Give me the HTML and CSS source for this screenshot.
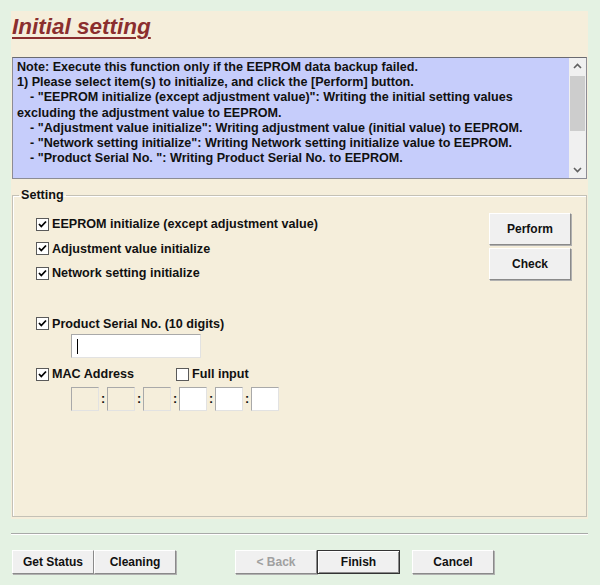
FILE: index.html
```html
<!DOCTYPE html>
<html>
<head>
<meta charset="utf-8">
<link rel="stylesheet" href="styles.css">
</head>
<body>
<div class="panel">
  <h1 class="title">Initial setting</h1>
  <div class="note">
    <div class="note-text">
      <div>Note: Execute this function only if the EEPROM data backup failed.</div>
      <div>1) Please select item(s) to initialize, and click the [Perform] button.</div>
      <div class="ind">- "EEPROM initialize (except adjustment value)": Writing the initial setting values</div>
      <div>excluding the adjustment value to EEPROM.</div>
      <div class="ind">- "Adjustment value initialize": Writing adjustment value (initial value) to EEPROM.</div>
      <div class="ind">- "Network setting initialize": Writing Network setting initialize value to EEPROM.</div>
      <div class="ind">- "Product Serial No. ": Writing Product Serial No. to EEPROM.</div>
    </div>
    <div class="vscroll">
      <svg class="arrow" width="17" height="17" viewBox="0 0 17 17"><path d="M5 10 L8.5 6.5 L12 10" fill="none" stroke="#606060" stroke-width="1.6"/></svg>
      <div class="track"><div class="thumb"></div></div>
      <svg class="arrow" width="17" height="17" viewBox="0 0 17 17"><path d="M5 7 L8.5 10.5 L12 7" fill="none" stroke="#606060" stroke-width="1.6"/></svg>
    </div>
  </div>
  <fieldset class="group">
    <legend>Setting</legend>
    <div class="group-body">
      <div class="opts">
        <div class="row r1"><span class="cb on"><svg width="11" height="11" viewBox="0 0 11 11"><path d="M2 5 L4.3 7.5 L9 2.5" fill="none" stroke="#000" stroke-width="1.8"/></svg></span>EEPROM initialize (except adjustment value)</div>
        <div class="row"><span class="cb on"><svg width="11" height="11" viewBox="0 0 11 11"><path d="M2 5 L4.3 7.5 L9 2.5" fill="none" stroke="#000" stroke-width="1.8"/></svg></span>Adjustment value initialize</div>
        <div class="row"><span class="cb on"><svg width="11" height="11" viewBox="0 0 11 11"><path d="M2 5 L4.3 7.5 L9 2.5" fill="none" stroke="#000" stroke-width="1.8"/></svg></span>Network setting initialize</div>
        <div class="row r4"><span class="cb on"><svg width="11" height="11" viewBox="0 0 11 11"><path d="M2 5 L4.3 7.5 L9 2.5" fill="none" stroke="#000" stroke-width="1.8"/></svg></span>Product Serial No. (10 digits)</div>
        <div class="serial"><span class="caret"></span></div>
        <div class="row r5">
          <span class="cb on"><svg width="11" height="11" viewBox="0 0 11 11"><path d="M2 5 L4.3 7.5 L9 2.5" fill="none" stroke="#000" stroke-width="1.8"/></svg></span><span class="mac-label">MAC Address</span>
          <span class="cb"></span>Full input
        </div>
        <div class="mac">
          <span class="mbox dis"></span><span class="colon">:</span>
          <span class="mbox dis"></span><span class="colon">:</span>
          <span class="mbox dis"></span><span class="colon">:</span>
          <span class="mbox"></span><span class="colon">:</span>
          <span class="mbox"></span><span class="colon">:</span>
          <span class="mbox"></span>
        </div>
      </div>
      <div class="side">
        <div class="btn tall">Perform</div>
        <div class="btn tall">Check</div>
      </div>
    </div>
  </fieldset>
</div>
<div class="sep"></div>
<div class="footer">
  <div class="btn">Get Status</div>
  <div class="btn">Cleaning</div>
  <div class="btn disabled back">&lt; Back</div>
  <div class="btn default">Finish</div>
  <div class="btn cancel">Cancel</div>
</div>
</body>
</html>
```
FILE: styles.css
```css
html, body {
  margin: 0;
  padding: 0;
  background: #e4f2e3;
  font-family: "Liberation Sans", Arial, sans-serif;
  font-size: 12px;
  font-weight: bold;
  color: #111;
}
body {
  padding: 11px 0 0 11px;
  width: 600px;
  height: 585px;
  box-sizing: border-box;
  overflow: hidden;
}
.panel {
  width: 577px;
  height: 508px;
  background: #f5eedb;
  box-sizing: border-box;
  padding: 2px 1px 0 1px;
  display: flex;
  flex-direction: column;
}
.title {
  margin: 0;
  font-size: 22.5px;
  font-style: italic;
  font-weight: bold;
  color: #8b2e2e;
  text-decoration: underline;
  text-decoration-thickness: 2px;
  text-underline-offset: 3px;
  line-height: 28px;
  height: 44px;
}
.note {
  display: flex;
  height: 122px;
  border: 1px solid #8c8c94;
  border-top-color: #6a6a70;
  background: #c6cdfb;
  box-sizing: border-box;
}
.note-text {
  flex: 1;
  padding: 2px 0 0 4px;
  font-size: 12.6px;
  line-height: 15.2px;
  white-space: nowrap;
  overflow: hidden;
}
.note-text .ind { padding-left: 13px; }
.vscroll {
  width: 17px;
  background: #f0f0f0;
  display: flex;
  flex-direction: column;
}
.arrow { display: block; }
.track { flex: 1; padding: 0 1px; }
.thumb { height: 55px; background: #cdcdcd; margin-top: 1px; }
.group {
  margin: 9px 0 0 0;
  padding: 0;
  border: 1px solid #c4c1b6;
  box-shadow: inset 1px 1px 0 #fff;
  flex: 1;
  min-width: 0;
  margin-bottom: 2px;
}
.group legend {
  padding: 0 2px;
  margin-left: 6px;
  line-height: 14px;
  font-size: 12.6px;
}
.group-body {
  display: flex;
  justify-content: space-between;
  padding: 0 15px 0 23px;
}
.opts { display: flex; flex-direction: column; font-size: 12.6px; }
.row {
  display: flex;
  align-items: center;
  height: 24.5px;
  white-space: nowrap;
}
.r1 { margin-top: 10px; }
.r4 { margin-top: 26px; }
.r5 { margin-top: 4px; }
.cb {
  width: 11px;
  height: 11px;
  border: 1px solid #5a5a5a;
  background: #fff;
  margin-right: 3px;
  display: inline-flex;
  align-items: center;
  justify-content: center;
  flex: none;
}
.cb svg { display: block; }
.mac-label { width: 124px; }
.serial {
  margin-left: 35px;
  margin-top: -2px;
  width: 130px;
  height: 24px;
  box-sizing: border-box;
  background: #fff;
  border: 1px solid #a9a9a9;
  border-bottom-color: #e2e2e2;
  border-right-color: #e2e2e2;
  display: flex;
  align-items: center;
  padding-left: 5px;
}
.caret { width: 1px; height: 15px; background: #000; }
.mac {
  display: flex;
  align-items: center;
  margin-left: 35px;
}
.mbox {
  width: 28px;
  height: 24px;
  box-sizing: border-box;
  background: #fff;
  border: 1px solid #a9a9a9;
  border-bottom-color: #e2e2e2;
  border-right-color: #e2e2e2;
}
.mbox.dis { background: #f5eedb; }
.colon { width: 8px; text-align: center; line-height: 24px; }
.side {
  display: flex;
  flex-direction: column;
  gap: 3px;
  margin-top: 11px;
}
.btn {
  box-sizing: border-box;
  width: 82px;
  height: 24px;
  background: #f0f0f0;
  border: 1px solid;
  border-color: #fff #8a8a8a #8a8a8a #fff;
  box-shadow: 1px 1px 0 #b0b0b0;
  display: flex;
  align-items: center;
  justify-content: center;
  white-space: nowrap;
}
.btn.tall { height: 32px; }
.sep {
  width: 577px;
  height: 1px;
  background: #a8aaa8;
  border-bottom: 1px solid #fff;
  margin-top: 14px;
}
.footer {
  display: flex;
  margin-top: 15px;
  margin-left: 1px;
}
.footer .btn { width: 82px; }
.disabled { color: #a0a0a0; }
.back { margin-left: 59px; }
.default { border: 1px solid #333; box-shadow: inset 1px 1px 0 #fff, inset -1px -1px 0 #8a8a8a; width: 83px !important; }
.cancel { margin-left: 12px; }
```
